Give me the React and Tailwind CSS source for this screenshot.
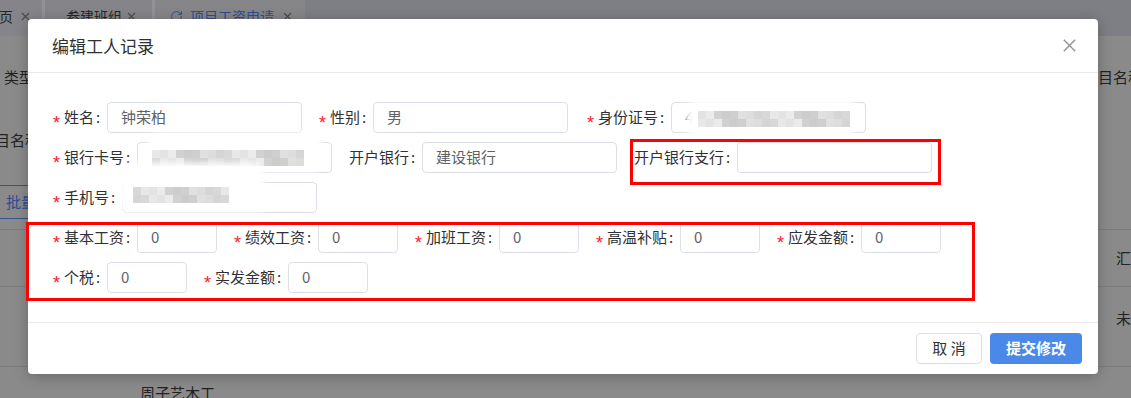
import React from "react";
import { RotateCw } from "lucide-react";

const SHADES = ["#d5d5d5", "#e3e3e3", "#cccccc", "#dddddd", "#e8e8e8", "#d1d1d1", "#e0e0e0", "#d8d8d8", "#ebebeb", "#cfcfcf"];

function Pixels({ cols, rows, seed = 0 }) {
  return (
    <div className="flex flex-col blur-[0.7px]">
      {Array.from({ length: rows }).map((_, r) => (
        <div key={r} className="flex">
          {Array.from({ length: cols }).map((_, c) => (
            <div
              key={c}
              className="h-[8px] w-[8px]"
              style={{ backgroundColor: SHADES[(c * 7 + r * 3 + seed) % SHADES.length] }}
            />
          ))}
        </div>
      ))}
    </div>
  );
}

function Redact({ patch, blocks, cols, rows, seed }) {
  return (
    <>
      <div className={`pointer-events-none absolute rounded-[12px] bg-white blur-[3px] ${patch}`} />
      <div className={`pointer-events-none absolute ${blocks}`}>
        <Pixels cols={cols} rows={rows} seed={seed} />
      </div>
    </>
  );
}

function Field({ label, required = true, inputClass = "w-[195px]", value = "", children }) {
  return (
    <div className="flex h-[31px] shrink-0 items-center">
      {required && (
        <span className="w-[11px] shrink-0 translate-y-[5px] font-['Liberation_Sans',sans-serif] text-[18px] leading-none text-[#f5222d]">
          *
        </span>
      )}
      <span className="whitespace-nowrap text-[15px] text-[#303133]">{label}</span>
      <span className="w-[13px] shrink-0 pl-[2px] text-[15px] text-[#303133]">:</span>
      <div
        className={`relative flex h-[31px] shrink-0 items-center rounded-[4px] border border-[#dcdfe6] bg-white pl-[13px] text-[15px] text-[#606266] ${inputClass}`}
      >
        {value}
        {children}
      </div>
    </div>
  );
}

function TabX() {
  return (
    <svg width="9" height="9" viewBox="0 0 9 9" className="shrink-0">
      <path d="M1 1L8 8M8 1L1 8" stroke="#4a4a4a" strokeWidth="1.1" fill="none" />
    </svg>
  );
}

export default function App() {
  return (
    <div className="relative h-[398px] w-[1131px] overflow-hidden bg-[#8a8a8a] font-['Noto_Sans_CJK_SC','Noto_Sans',sans-serif]">
      {/* background page (dimmed) */}
      <div className="flex h-[36px] bg-[#7e7f84] text-[14px]">
        <div className="flex w-[42px] items-center gap-[8px] bg-[#858589] pb-[4px] text-[#262626]">
          <span className="ml-[-15px] whitespace-nowrap">首页</span>
          <TabX />
        </div>
        <div className="w-[3px] bg-[#929296]" />
        <div className="flex w-[107px] items-center gap-[5px] bg-[#858589] pb-[4px] pl-[21px] text-[#262626]">
          <span className="whitespace-nowrap">参建班组</span>
          <TabX />
        </div>
        <div className="w-[3px] bg-[#929296]" />
        <div className="flex w-[150px] items-center bg-[#868689] pb-[4px] pl-[15px] text-[#2d4c93]">
          <RotateCw size={13} strokeWidth={1.8} className="shrink-0" />
          <span className="ml-[7px] whitespace-nowrap">项目工资申请</span>
          <span className="ml-[9px]">
            <TabX />
          </span>
        </div>
      </div>
      <div className="flex flex-col text-[15px] text-[#222]">
        <div className="flex h-[82px] items-center justify-between">
          <span className="ml-[4px]">类型</span>
          <span className="mr-[-12px] whitespace-nowrap">项目名称</span>
        </div>
        <div className="flex h-[44px] items-center">
          <span className="ml-[-20px] whitespace-nowrap">项目名称</span>
        </div>
        <div className="mt-[23px] flex">
          <div className="ml-[-10px] flex h-[34px] items-center border border-[#34548f] pl-[15px] pr-[15px] text-[#2d4c93]">
            批量删除
          </div>
        </div>
        <div className="mt-[10px] flex h-[58px] items-center justify-end border-y border-[#7d7d7d]">
          <span className="mr-[-15px] whitespace-nowrap">汇总</span>
        </div>
        <div className="flex h-[80px] items-start justify-end border-b border-[#7d7d7d] pt-[20px]">
          <span className="mr-[-30px] whitespace-nowrap">未提交</span>
        </div>
        <div className="flex items-start pt-[15px]">
          <span className="ml-[140px] whitespace-nowrap">周子艺木工</span>
          <span className="ml-[142px] mt-[17px] whitespace-nowrap">湖北省武汉</span>
          <span className="ml-[37px] mt-[17px] whitespace-nowrap">木工班组</span>
          <span className="ml-[47px] mt-[17px] whitespace-nowrap">未提交审核</span>
        </div>
      </div>

      {/* dialog */}
      <div className="absolute left-[28px] top-[19px] w-[1070px] rounded-[4px] bg-white shadow-[0_2px_14px_rgba(0,0,0,0.25)]">
        <div className="flex h-[54px] items-center justify-between border-b border-[#e8e8e8] pl-[24px] pr-[22px]">
          <span className="text-[17px] text-[#303133]">编辑工人记录</span>
          <svg width="13" height="13" viewBox="0 0 13 13">
            <path d="M0.8 0.8L12.2 12.2M12.2 0.8L0.8 12.2" stroke="#909399" strokeWidth="1.4" fill="none" />
          </svg>
        </div>

        <div className="pb-[21px] pl-[25px] pt-[29px]">
          <div className="flex flex-col gap-[9px]">
            <div className="flex gap-[17px]">
              <Field label="姓名" value="钟荣柏" />
              <Field label="性别" value="男" />
              <div className="ml-[2px]">
                <Field label="身份证号" value="4">
                  <Redact
                    patch="left-[14px] top-[-4px] h-[38px] w-[170px]"
                    blocks="left-[26px] top-[8px]"
                    cols={19}
                    rows={2}
                    seed={1}
                  />
                </Field>
              </div>
            </div>
            <div className="flex gap-[17px]">
              <Field label="银行卡号">
                <Redact
                  patch="left-[9px] top-[-10px] h-[38px] w-[175px]"
                  blocks="left-[14px] top-[7px]"
                  cols={19}
                  rows={2}
                  seed={4}
                />
              </Field>
              <Field label="开户银行" required={false} value="建设银行" />
              <div className="relative">
                <Field label="开户银行支行" required={false} />
                <div className="pointer-events-none absolute bottom-[-12px] left-[-4px] right-[-9px] top-[-3px] border-[3px] border-[#ff0000]" />
              </div>
            </div>
            <div className="flex gap-[17px]">
              <Field label="手机号">
                <Redact
                  patch="left-[-4px] top-[-20px] h-[50px] w-[145px]"
                  blocks="left-[10px] top-[4px]"
                  cols={12}
                  rows={2}
                  seed={7}
                />
              </Field>
            </div>
          </div>

          <div className="relative mt-[9px] flex flex-col gap-[9px] pb-[8px]">
            <div className="flex gap-[17px]">
              <Field label="基本工资" inputClass="w-[80px]" value="0" />
              <Field label="绩效工资" inputClass="w-[80px]" value="0" />
              <Field label="加班工资" inputClass="w-[80px]" value="0" />
              <Field label="高温补贴" inputClass="w-[80px]" value="0" />
              <Field label="应发金额" inputClass="w-[80px]" value="0" />
            </div>
            <div className="flex gap-[17px]">
              <Field label="个税" inputClass="w-[80px]" value="0" />
              <Field label="实发金额" inputClass="w-[80px]" value="0" />
            </div>
            <div className="pointer-events-none absolute bottom-0 left-[-27px] top-0 w-[949px] border-[3px] border-[#ff0000]" />
          </div>
        </div>

        <div className="flex justify-end gap-[8px] border-t border-[#ebebeb] px-[16px] py-[10px]">
          <button className="flex h-[31px] w-[66px] items-center justify-center rounded-[4px] border border-[#dcdfe6] bg-white text-[15px] text-[#333]">
            取 消
          </button>
          <button className="flex h-[31px] w-[92px] items-center justify-center rounded-[4px] bg-[#4a89e8] text-[15px] font-bold text-white">
            提交修改
          </button>
        </div>
      </div>
    </div>
  );
}
